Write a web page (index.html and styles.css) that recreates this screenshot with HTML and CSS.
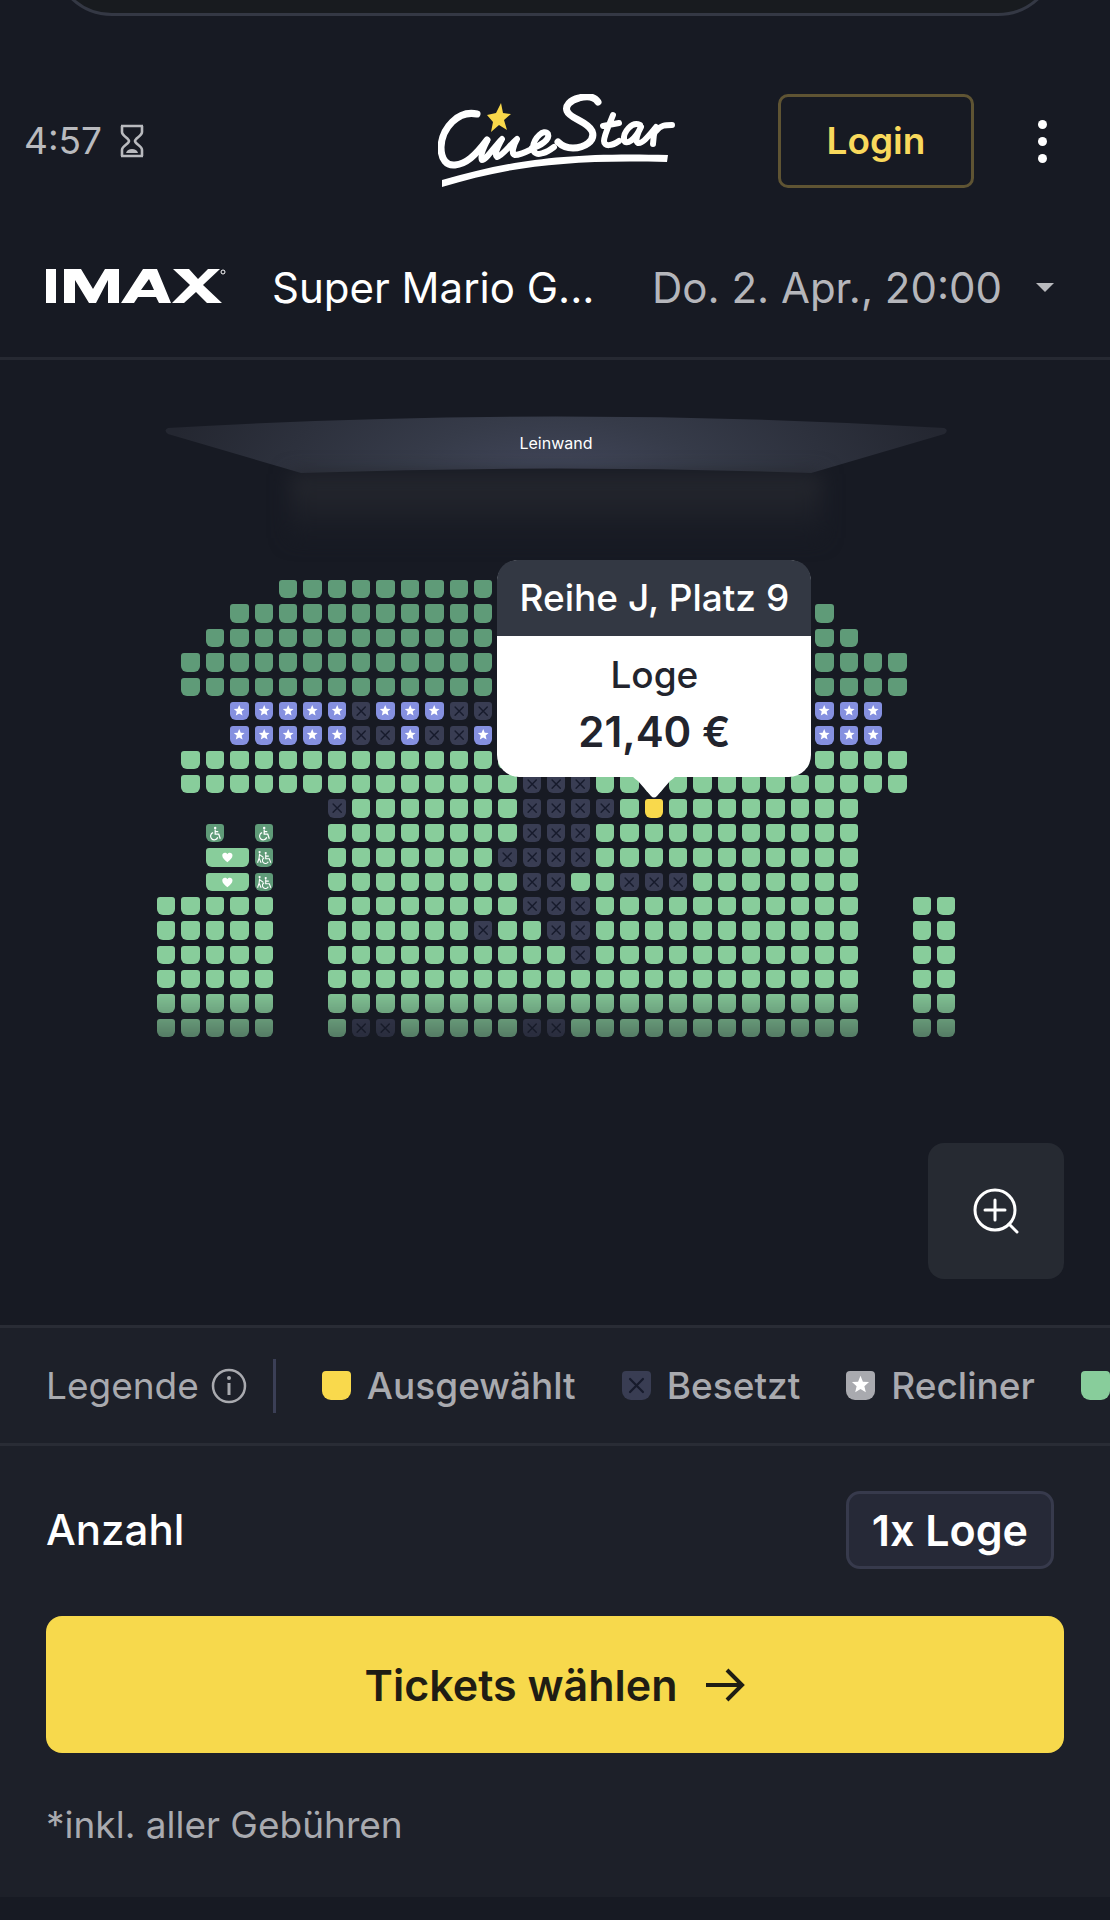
FILE: index.html
```html
<!DOCTYPE html>
<html lang="de">
<head>
  <meta charset="UTF-8" />
  <meta name="viewport" content="width=device-width, initial-scale=1.0" />
  <title>CineStar – Sitzplatz wählen</title>
  <link rel="stylesheet" href="styles.css">
</head>
<body>
  <div class="sheet-edge"><div class="sheet"></div></div>

  <header class="topbar">
    <div class="timer">
      <span>4:57</span>
      <svg class="hourglass" viewBox="0 0 24 34" fill="none" stroke="currentColor" stroke-width="2.6">
        <path d="M1 2h22M1 32h22M2 2v6c0 4 7 6 7 9s-7 5-7 9v6M22 2v6c0 4-7 6-7 9s7 5 7 9v6" />
        <path d="M6 29c1-3 3-4 6-4s5 1 6 4z" fill="currentColor" stroke="none" />
      </svg>
    </div>

    <a class="logo" href="#" aria-label="CineStar">
      <svg viewBox="0 0 238 94" fill="none" stroke="#fff" stroke-width="7" stroke-linecap="round" stroke-linejoin="round">
        <path d="M39 20C20 16 4 34 3 53c0 13 6 19 14 18 11-1 20-9 32-25" />
        <path d="M49 47c-4 8-7 16-5 19 4 0 12-13 20-21-5 9-8 16-5 18 5-1 12-11 20-18-4 7-6 15-2 16 5 0 11-3 17-6" stroke-width="6" />
        <path d="M94 54c9-2 18-9 16-14-4-6-14 4-15 13 0 7 5 8 10 6 4-1 7-3 11-6" stroke-width="6" />
        <path d="M160 8C156 2 148 2 141 4c-9 2-14 8-12 13 3 8 20 10 25 20 4 10-8 17-19 17-7 0-12-3-15-6" />
        <path d="M175 21c-3 8-9 20-9 26 0 6 8 5 15 0M165 32l16-3" stroke-width="6" />
        <path d="M202 31c-8-4-17 7-16 15 2 6 11 0 17-13-4 7-6 14-3 16 4 1 10-6 18-16-2 6-3 12-3 17M218 37c5-6 9-6 16-6" stroke-width="6" />
        <path class="swoosh" d="M4 86C70 67 125 58 230 61l-1 7C125 65 66 74 4 93z" />
        <path class="star" d="m63 9 2 10 8 1-7 6 3 10-8-5-8 7 2-10-6-7 9-2z" />
      </svg>
    </a>

    <div class="actions">
      <button class="login">Login</button>
      <button class="more" aria-label="Menü"><i></i><i></i><i></i></button>
    </div>
  </header>

  <button class="show">
    <svg class="imax" viewBox="0 0 180 38" fill="#fff" role="img" aria-label="IMAX">
      <path d="M0 0h10v34H0zM18 0h17l12 20L59 0h14v34H62V11L50 34h-7L29 11v23H18z" />
      <path d="m75 34 22-34h14l14 34h-12l-3-6H92l-4 6zM95 21h13l-5-11z" />
      <path d="m126 34 18-18-17-16h16l9 10 10-10h12l-17 16 19 18h-15l-11-11-12 11z" />
      <circle cx="177" cy="3" r="2" fill="none" stroke="#fff" />
    </svg>
    <span class="film">Super Mario G...</span>
    <span class="date">Do. 2. Apr., 20:00</span>
    <span class="caret"></span>
  </button>

  <main class="hall">
    <div class="screen">
      <svg class="screen-shape" viewBox="0 0 782 58">
        <defs>
          <radialGradient id="screenFill" gradientUnits="userSpaceOnUse" cx="391" cy="80" r="400" gradientTransform="matrix(1 0 0 .5 0 40)">
            <stop offset="0" stop-color="#454a5f" />
            <stop offset=".4" stop-color="#363b49" />
            <stop offset="1" stop-color="#242731" />
          </radialGradient>
        </defs>
        <path d="M3 12Q391-11 779 12q5 2 0 6L646 57Q391 48 136 57L3 18q-5-4 0-6z" fill="url(#screenFill)" />
      </svg>
      <span class="screen-label">Leinwand</span>
      <div class="screen-glow"></div>
    </div>

    <div class="plan">
      <div class="seats" id="seats"></div>
      <div class="tooltip">
        <div class="tooltip-head">Reihe J, Platz 9</div>
        <div class="tooltip-body">
          <span>Loge</span>
          <strong>21,40 €</strong>
        </div>
        <svg class="tooltip-arrow" viewBox="0 0 44 23" fill="#fff">
          <path d="M0 0h44q-3 3-6 5L25 20q-3 3-6 0L6 5Q3 3 0 0z" />
        </svg>
      </div>
    </div>

    <button class="zoom" aria-label="Vergrößern">
      <svg viewBox="0 0 48 48" fill="none" stroke="#fff" stroke-width="3" stroke-linecap="round">
        <circle cx="23" cy="23" r="20" />
        <path d="M23 13v20M13 23h20M37 37l8 8" />
      </svg>
    </button>
  </main>

  <section class="legend">
    <button class="legend-title">
      Legende
      <svg viewBox="0 0 36 36" fill="none" stroke="currentColor" stroke-width="2.5">
        <circle cx="18" cy="18" r="16" />
        <path d="M18 15v12" stroke-width="3" />
        <circle cx="18" cy="10" r="2" fill="currentColor" stroke="none" />
      </svg>
    </button>
    <ul class="legend-list">
      <li><span class="key key-selected"></span>Ausgewählt</li>
      <li><span class="key key-taken"><svg viewBox="0 0 18 18"><use href="#i-cross" /></svg></span>Besetzt</li>
      <li><span class="key key-recliner"><svg viewBox="0 0 18 18"><use href="#i-star" /></svg></span>Recliner</li>
      <li><span class="key key-loge"></span></li>
    </ul>
  </section>

  <footer class="order">
    <div class="amount">
      <span>Anzahl</span>
      <span class="chip">1x Loge</span>
    </div>
    <button class="submit">
      Tickets wählen
      <svg viewBox="0 0 40 34" fill="none" stroke="currentColor" stroke-width="4">
        <path d="M1 17h36M22 2l15 15-15 15" />
      </svg>
    </button>
    <p class="note">*inkl. aller Gebühren</p>
  </footer>

  <svg class="icons" aria-hidden="true">
    <symbol id="i-cross" viewBox="0 0 18 18">
      <path d="m5 5 8 8M13 5l-8 8" fill="none" stroke="#171b2c" stroke-width="1.4" stroke-linecap="round" />
    </symbol>
    <symbol id="i-star" viewBox="0 0 18 18">
      <path d="m9 3 1.5 3.6 3.8.3-2.9 2.5.9 3.8-3.3-2-3.3 2 .9-3.8-2.9-2.5 3.8-.3z" fill="#fff" />
    </symbol>
    <symbol id="i-heart" viewBox="0 0 18 18">
      <path d="M9 14C6 11.500 4 9.500 4 7.300 4 4.300 7.600 3.800 9 6c1.400-2.200 5-1.700 5 1.300C14 9.500 12 11.500 9 14z" fill="#fff" />
    </symbol>
    <symbol id="i-wheel" viewBox="0 0 18 18">
      <circle cx="9" cy="4" r="1.200" fill="#fff" />
      <path d="M9 5.500v4.500h3.500l1.500 4.500M9 7.500h3M7 8.500a3.600 3.600 0 1 0 4.500 4.500" fill="none" stroke="#fff" stroke-width="1.200" />
    </symbol>
    <symbol id="i-escort" viewBox="0 0 18 18">
      <circle cx="4.500" cy="4" r="1.100" fill="#fff" />
      <circle cx="10.500" cy="5" r="1.100" fill="#fff" />
      <path d="M4.500 5.500 4 10l-1.500 4.500M4 10l2 4.500M4.500 6.500 8 9M10.500 6v4.500h3.500l1.500 4M10.500 8h3M9 9.500a3 3 0 1 0 4 4" fill="none" stroke="#fff" stroke-width="1.100" />
    </symbol>
  </svg>

  <script src="seats.js"></script>
</body>
</html>
```
FILE: styles.css
```css
* {
  box-sizing: border-box;
}

body {
  margin: 0;
  min-height: 100vh;
  background: #171a23;
  color: #fff;
  font-family: Inter, "Liberation Sans", sans-serif;
  font-size: 37px;
  line-height: 44px;
}

button {
  margin: 0;
  padding: 0;
  border: none;
  background: none;
  color: inherit;
  font: inherit;
  cursor: pointer;
}

.sheet-edge {
  height: 16px;
  padding: 0 52px;
  overflow: hidden;
  display: flex;
  align-items: flex-end;
}

.sheet {
  flex: 1;
  flex-shrink: 0;
  height: 160px;
  background: #181b1f;
  border: 3px solid #343844;
  border-radius: 60px;
}

.topbar {
  display: grid;
  grid-template-columns: 1fr auto 1fr;
  align-items: center;
  padding: 78px 55px 0 24px;
}

.timer {
  display: flex;
  align-items: center;
  gap: 18px;
  color: #b9babe;
}

.hourglass {
  width: 24px;
  height: 34px;
}

.logo {
  margin-left: 34px;
}

.logo svg {
  display: block;
  width: 238px;
  height: 94px;
}

.logo .swoosh {
  fill: #fff;
  stroke: none;
}

.logo .star {
  fill: #f9d84a;
  stroke: none;
}

.actions {
  display: flex;
  justify-content: flex-end;
  align-items: center;
  gap: 56px;
}

.login {
  width: 196px;
  height: 94px;
  border: 3px solid #5f5433;
  border-radius: 10px;
  color: #f9d95c;
  font-weight: 600;
}

.more {
  display: flex;
  flex-direction: column;
  gap: 8px;
  padding: 8px;
}

.more i {
  width: 9px;
  height: 9px;
  border-radius: 50%;
  background: #fff;
}

.show {
  display: flex;
  align-items: center;
  width: 100%;
  height: 172px;
  padding: 30px 56px 0 46px;
  border-bottom: 3px solid #262932;
  font-size: 42px;
  text-align: left;
}

.imax {
  width: 180px;
  height: 38px;
}

.film {
  margin-left: 46px;
}

.date {
  margin-left: auto;
  color: #b5b6bb;
}

.caret {
  margin-left: 34px;
  border: 9px solid transparent;
  border-top-color: #b9babe;
  border-bottom: 0;
}

.hall {
  display: flex;
  flex-direction: column;
  align-items: center;
  padding: 56px 46px 46px 48px;
}

.screen {
  position: relative;
  width: 77%;
  text-align: center;
}

.screen-shape {
  display: block;
  width: 100%;
}

.screen-label {
  position: absolute;
  inset: 15px 0 auto;
  font-size: 16px;
  line-height: 24px;
}

.screen-glow {
  height: 64px;
  margin: 0 16%;
  background: linear-gradient(#26282f, #171a23);
  filter: blur(10px);
}

.plan {
  position: relative;
  width: 798px;
  max-width: 100%;
  margin-top: 42px;
}

.seats {
  display: grid;
  grid-template-columns: repeat(33, 1fr);
  gap: 6px;
  mask-image: linear-gradient(#000 89%, rgba(0, 0, 0, 0.55));
}

.seat {
  aspect-ratio: 1;
  border-radius: 3px 3px 6px 6px;
  background: #88cd9b;
}

.seat svg {
  display: block;
  width: 100%;
  height: 100%;
}

.seat-parkett,
.seat-wheel,
.seat-escort {
  background: #5f9b78;
}

.seat-recliner {
  background: #8590e0;
}

.seat-taken {
  background: #393d53;
}

.seat-selected {
  background: #f9d94c;
}

.seat-love {
  position: relative;
  grid-column: span 2;
  aspect-ratio: auto;
}

.seat-love svg {
  position: absolute;
  inset: 0;
}

/* sits on the selected seat */
.tooltip {
  position: absolute;
  right: 18%;
  bottom: 57%;
  width: 314px;
  border-radius: 22px;
  background: #fff;
  color: #22242d;
  text-align: center;
}

.tooltip-head {
  padding: 16px 0;
  border-radius: 20px 20px 0 0;
  background: #333843;
  font-weight: 500;
  color: #fff;
}

.tooltip-body {
  display: flex;
  flex-direction: column;
  gap: 13px;
  padding: 17px 0 23px;
  font-weight: 500;
}

.tooltip-body strong {
  font-size: 42px;
  font-weight: 600;
}

.tooltip-arrow {
  position: absolute;
  top: 100%;
  left: 50%;
  width: 44px;
  height: 23px;
  margin: -1px 0 0 -22px;
}

.zoom {
  display: flex;
  align-items: center;
  justify-content: center;
  align-self: flex-end;
  width: 136px;
  height: 136px;
  margin-top: 106px;
  border-radius: 16px;
  background: #262a32;
}

.zoom svg {
  width: 48px;
  height: 48px;
}

.legend {
  display: flex;
  align-items: center;
  height: 118px;
  padding-left: 46px;
  overflow: hidden;
  background: #1d2029;
  border-top: 3px solid #292c35;
  color: #a9aaaf;
}

.legend-title {
  display: flex;
  align-items: center;
  flex-shrink: 0;
  gap: 12px;
  height: 54px;
  padding-right: 26px;
  border-right: 3px solid #3b3f56;
}

.legend-title svg {
  width: 36px;
  height: 36px;
}

.legend-list {
  display: flex;
  gap: 46px;
  margin: 0;
  padding: 0 0 0 46px;
  list-style: none;
  font-weight: 500;
}

.legend-list li {
  display: flex;
  align-items: center;
  gap: 16px;
}

.key {
  width: 29px;
  height: 29px;
  border-radius: 4px 4px 9px 9px;
}

.key svg {
  display: block;
}

.key-selected {
  background: #f9d94c;
}

.key-taken {
  background: #393d53;
}

.key-recliner {
  background: #a9aaaf;
}

.key-loge {
  background: #88cd9b;
}

.order {
  padding: 45px 46px 50px;
  border-top: 3px solid #292c35;
  background: #1d2029;
}

.amount {
  display: flex;
  align-items: center;
  justify-content: space-between;
  padding-right: 10px;
  font-size: 42px;
  font-weight: 500;
}

.chip {
  padding: 14px 23px;
  border: 3px solid #373a4c;
  border-radius: 14px;
  background: #262937;
  font-size: 43px;
  font-weight: 600;
}

.submit {
  display: flex;
  align-items: center;
  justify-content: center;
  gap: 28px;
  width: 100%;
  height: 137px;
  margin-top: 47px;
  border-radius: 16px;
  background: #f7d94c;
  color: #1f1d14;
  font-size: 43px;
  font-weight: 600;
}

.submit svg {
  width: 40px;
  height: 34px;
}

.note {
  margin: 50px 0 0;
  color: #a9aaaf;
}

.icons {
  position: absolute;
  width: 0;
  height: 0;
}
```
FILE: seats.js
```js
// p = Parkett, g = Loge, r = Recliner, x = besetzt, s = ausgewählt
// w = Rollstuhl, e = Begleitung, L = Loveseat (2 Plätze), . = kein Platz
const rows = [
  ".....pppppppppppppppppppppp......",
  "...ppppppppppppppppppppppppp.....",
  "..ppppppppppppppppppppppppppp....",
  ".pppppppppppppppppppppppppppppp..",
  ".pppppppppppppppppppppppppppppp..",
  "...rrrrrxrrrxxxxxrrrrrrrrrrrrr...",
  "...rrrrrxxrxxrxxxrrrrrrrrrrrrr...",
  ".gggggggggggggggggggggggggggggg..",
  ".ggggggggggggggxxxggggggggggggg..",
  ".......xgggggggxxxxgsgggggggg....",
  "..w.w..ggggggggxxxggggggggggg....",
  "..Le..gggggggxxxxggggggggggg....",
  "..Le..ggggggggxxggxxxggggggg....",
  "ggggg..ggggggggxxxggggggggggg..gg",
  "ggggg..ggggggxggxxggggggggggg..gg",
  "ggggg..ggggggggggxggggggggggg..gg",
  "ggggg..gggggggggggggggggggggg..gg",
  "ggggg..gggggggggggggggggggggg..gg",
  "ggggg..gxxgggggxxgggggggggggg..gg"
];

const types = {
  p: ["parkett"],
  g: ["loge"],
  r: ["recliner", "star"],
  x: ["taken", "cross"],
  s: ["selected"],
  w: ["wheel", "wheel"],
  e: ["escort", "escort"],
  L: ["love", "heart"]
};

const seats = document.getElementById("seats");

rows.forEach((row, r) => {
  [...row].forEach((char, c) => {
    if (char === ".") {
      seats.append(document.createElement("span"));
      return;
    }
    const [type, icon] = types[char];
    const seat = document.createElement("button");
    seat.className = "seat seat-" + type;
    seat.disabled = char === "x";
    seat.setAttribute("aria-label", "Reihe " + (r + 1) + ", Platz " + (c + 1));
    if (icon) {
      seat.innerHTML = `<svg viewBox="0 0 18 18"><use href="#i-${icon}" /></svg>`;
    }
    seats.append(seat);
  });
});
```
